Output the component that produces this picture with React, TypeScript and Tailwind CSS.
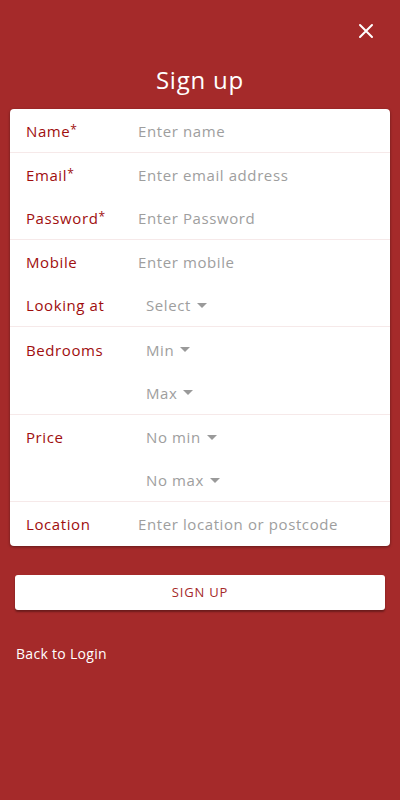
const rows: { label: string; req?: boolean; kind: "input" | "select"; value: string; border?: boolean }[] = [
  { label: "Name", req: true, kind: "input", value: "Enter name", border: true },
  { label: "Email", req: true, kind: "input", value: "Enter email address" },
  { label: "Password", req: true, kind: "input", value: "Enter Password", border: true },
  { label: "Mobile", kind: "input", value: "Enter mobile" },
  { label: "Looking at", kind: "select", value: "Select", border: true },
  { label: "Bedrooms", kind: "select", value: "Min" },
  { label: "", kind: "select", value: "Max", border: true },
  { label: "Price", kind: "select", value: "No min" },
  { label: "", kind: "select", value: "No max", border: true },
  { label: "Location", kind: "input", value: "Enter location or postcode" },
];

function Caret() {
  return (
    <svg width="10" height="5" viewBox="0 0 10 5" className="ml-[6px]">
      <path d="M0 0h10L5 5z" fill="#9a9a9a" />
    </svg>
  );
}

export default function App() {
  return (
    <div
      className="min-h-[800px] w-full bg-[#a52a2a] text-white"
      style={{ fontFamily: '"Open Sans", sans-serif' }}
    >
      <div className="flex justify-end px-[26px] pt-[23px]">
        <svg width="16" height="16" viewBox="0 0 16 16">
          <path d="M2 2L14 14M14 2L2 14" stroke="white" strokeWidth="2" strokeLinecap="round" />
        </svg>
      </div>
      <h1 className="mt-[25px] text-center text-[24px] leading-[32px] tracking-[0.8px]">Sign up</h1>
      <div className="mx-[10px] mt-[13px] overflow-hidden rounded-[4px] bg-white shadow-[0_1px_3px_rgba(0,0,0,0.4)]">
        {rows.map((r, i) => (
          <div
            key={i}
            className={`flex h-[43.7px] items-center px-[16px] pt-[1px] text-[15px] tracking-[0.6px] ${r.border ? "border-b border-[#f6e9e9]" : ""}`}
          >
            <div className="w-[112px] text-[#a00e0e]">
              {r.label}
              {r.req && <span className="align-[3px] text-[12px]">*</span>}
            </div>
            {r.kind === "input" ? (
              <div className="text-[#9e9e9e]">{r.value}</div>
            ) : (
              <div className="flex items-center pl-[8px] text-[#9e9e9e]">
                {r.value}
                <Caret />
              </div>
            )}
          </div>
        ))}
      </div>
      <div className="mx-[15px] mt-[29px] flex h-[35px] items-center justify-center rounded-[3px] bg-white text-[13px] tracking-[0.8px] text-[#a52a2a] shadow-[0_2px_2px_rgba(0,0,0,0.35)]">
        SIGN UP
      </div>
      <div className="mt-[33px] px-[16px] text-[14px] tracking-[0.3px]">Back to Login</div>
    </div>
  );
}
